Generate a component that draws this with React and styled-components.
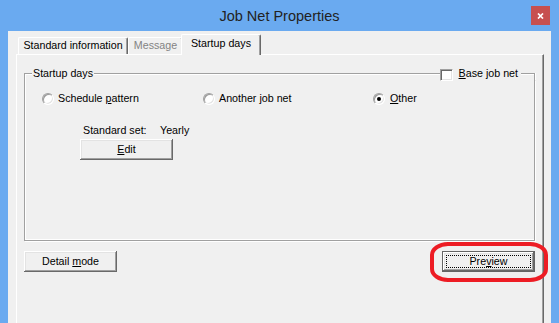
import React, { useState } from "react";
import styled, { createGlobalStyle, css } from "styled-components";

const GlobalStyle = createGlobalStyle`
    html, body {
        margin: 0;
        padding: 0;
        background: #6aaaf0;
    }
    body {
        font-family: "Liberation Sans", Arial, sans-serif;
        font-size: 10.7px;
        color: #000;
    }
`;

const bevel = css`
    box-shadow: inset -1px -1px 0 #696969, inset 1px 1px 0 #ffffff,
        inset -2px -2px 0 #a0a0a0, inset 2px 2px 0 #e3e3e3;
`;

const Window = styled.div`
    width: 559px;
    height: 323px;
    overflow: hidden;
    background: #6aaaf0;
    display: flex;
    flex-direction: column;
`;

const TitleBar = styled.div`
    height: 31px;
    flex-shrink: 0;
    display: grid;
    grid-template-columns: 1fr auto 1fr;
    align-items: center;
`;

const Title = styled.div`
    grid-column: 2;
    font-size: 14.5px;
    color: #222;
    padding-top: 1px;
`;

const CloseButton = styled.div`
    grid-column: 3;
    justify-self: end;
    align-self: start;
    margin: 6px 9px 0 0;
    width: 19px;
    height: 19px;
    background: #c75050;
    display: flex;
    align-items: center;
    justify-content: center;
`;

const Client = styled.div`
    flex: 1;
    margin: 0 8px;
    padding: 3px 7px 0 8px;
    background: #f0f0f0;
    display: flex;
    flex-direction: column;
`;

const TabStrip = styled.div`
    height: 20px;
    flex-shrink: 0;
    display: flex;
    align-items: flex-end;
    padding-left: 2px;
`;

const Tab = styled.div`
    box-sizing: border-box;
    width: ${(p) => p.width}px;
    height: ${(p) => (p.selected ? 21 : 17)}px;
    padding-top: ${(p) => (p.selected ? 2 : 1)}px;
    line-height: 13px;
    text-align: center;
    white-space: nowrap;
    background: #f0f0f0;
    border-top: 1px solid #fff;
    border-left: 1px solid #fff;
    border-right: 1px solid #696969;
    border-top-left-radius: 2px;
    border-top-right-radius: 2px;
    box-shadow: inset -1px 0 0 #a0a0a0;
    color: ${(p) => (p.disabled ? "#838383" : "#000")};
    ${(p) =>
        p.selected &&
        css`
            position: relative;
            margin: 0 -2px -1px -2px;
        `}
`;

const Panel = styled.div`
    flex: 1;
    border-top: 1px solid #fff;
    border-left: 1px solid #fff;
    border-right: 1px solid #696969;
    box-shadow: inset -1px 0 0 #a0a0a0;
    padding: 12px 8px 0 7px;
    display: flex;
    flex-direction: column;
`;

const GroupHeader = styled.div`
    height: 13px;
    display: flex;
    align-items: center;
`;

const Corner = styled.div`
    box-sizing: border-box;
    align-self: flex-end;
    height: 7px;
    width: ${(p) => p.width}px;
    margin-left: ${(p) => p.offset || 0}px;
    border-top: 1px solid #a0a0a0;
    ${(p) =>
        p.right
            ? css`
                  border-right: 1px solid #a0a0a0;
                  box-shadow: 1px 0 0 #fff, inset 0 1px 0 #fff;
              `
            : css`
                  border-left: 1px solid #a0a0a0;
                  box-shadow: inset 1px 1px 0 #fff;
              `}
`;

const HeaderLine = styled.div`
    flex: 1;
    align-self: flex-end;
    height: 7px;
    box-sizing: border-box;
    border-top: 1px solid #a0a0a0;
    box-shadow: inset 0 1px 0 #fff;
`;

const Caption = styled.span`
    padding: 0 1px;
    line-height: 13px;
    white-space: nowrap;
`;

const GroupBody = styled.div`
    box-sizing: border-box;
    height: 161px;
    border: 1px solid #a0a0a0;
    border-top: none;
    box-shadow: 1px 1px 0 #fff, inset 1px -1px 0 #fff;
    padding: 12px 0 0 17px;
`;

const RadioRow = styled.div`
    display: grid;
    grid-template-columns: 161px 170px auto;
    height: 13px;
    align-items: center;
`;

const Choice = styled.label`
    display: flex;
    align-items: center;
    gap: ${(p) => p.gap || 4}px;
    white-space: nowrap;
    line-height: 13px;
    cursor: default;
`;

const RadioCircle = styled.span`
    box-sizing: border-box;
    width: 12px;
    height: 12px;
    border-radius: 50%;
    background: #fff;
    border: 1px solid;
    border-color: #a0a0a0 #fff #fff #a0a0a0;
    box-shadow: inset 1px 1px 0 #9a9a9a, inset -1px -1px 0 #e3e3e3;
    display: flex;
    align-items: center;
    justify-content: center;

    &::after {
        content: "";
        width: 4px;
        height: 4px;
        border-radius: 50%;
        background: ${(p) => (p.checked ? "#000" : "transparent")};
    }
`;

const CheckBox = styled.span`
    box-sizing: border-box;
    width: 13px;
    height: 12px;
    margin-top: 2px;
    background: #fff;
    border: 1px solid;
    border-color: #a0a0a0 #fff #fff #a0a0a0;
    box-shadow: inset 1px 1px 0 #696969, inset -1px -1px 0 #e3e3e3;
`;

const SettingBlock = styled.div`
    margin-top: 19px;
    margin-left: 38px;
    display: flex;
    flex-direction: column;
    gap: 2px;
`;

const InfoRow = styled.div`
    display: grid;
    grid-template-columns: 77px auto;
    padding-left: 3px;
    line-height: 13px;
`;

const Button = styled.div`
    box-sizing: border-box;
    width: 93px;
    height: 21px;
    background: #f0f0f0;
    display: flex;
    align-items: center;
    justify-content: center;
    line-height: 13px;
    ${bevel}
    ${(p) =>
        p.isDefault &&
        css`
            position: relative;
            border: 1px solid #646464;
            &::before {
                content: "";
                position: absolute;
                inset: 3px;
                border: 1px dotted #000;
            }
        `}
`;

const ButtonRow = styled.div`
    margin-top: 10px;
    display: flex;
    justify-content: space-between;
`;

const Highlighted = styled.div`
    position: relative;
`;

const RedMark = styled.div`
    position: absolute;
    left: -12px;
    right: -13px;
    top: -9px;
    bottom: -10px;
    border: 4px solid #ed1c24;
    border-radius: 18px / 13px;
    pointer-events: none;
`;

function CloseGlyph() {
    return (
        <svg width="7" height="6" viewBox="0 0 7 6">
            <path d="M1 0.5 L6 5.5 M6 0.5 L1 5.5" stroke="#fff" strokeWidth="1.7" />
        </svg>
    );
}

export default function App() {
    const [choice, setChoice] = useState("other");
    const [baseNet, setBaseNet] = useState(false);

    return (
        <>
            <GlobalStyle />
            <Window>
                <TitleBar>
                    <Title>Job Net Properties</Title>
                    <CloseButton>
                        <CloseGlyph />
                    </CloseButton>
                </TitleBar>
                <Client>
                    <TabStrip>
                        <Tab width={110}>Standard information</Tab>
                        <Tab width={55} disabled>
                            Message
                        </Tab>
                        <Tab width={80} selected>
                            Startup days
                        </Tab>
                    </TabStrip>
                    <Panel>
                        <GroupHeader>
                            <Corner width={8} />
                            <Caption>Startup days</Caption>
                            <HeaderLine />
                            <Choice gap={6} onClick={() => setBaseNet((v) => !v)}>
                                <CheckBox />
                                <span>
                                    <u>B</u>ase job net
                                </span>
                            </Choice>
                            <Corner width={14} offset={3} right />
                        </GroupHeader>
                        <GroupBody>
                            <RadioRow>
                                <Choice onClick={() => setChoice("schedule")}>
                                    <RadioCircle checked={choice === "schedule"} />
                                    <span>
                                        Schedule <u>p</u>attern
                                    </span>
                                </Choice>
                                <Choice onClick={() => setChoice("another")}>
                                    <RadioCircle checked={choice === "another"} />
                                    <span>Another job net</span>
                                </Choice>
                                <Choice gap={5} onClick={() => setChoice("other")}>
                                    <RadioCircle checked={choice === "other"} />
                                    <span>
                                        <u>O</u>ther
                                    </span>
                                </Choice>
                            </RadioRow>
                            <SettingBlock>
                                <InfoRow>
                                    <span>Standard set:</span>
                                    <span>Yearly</span>
                                </InfoRow>
                                <Button>
                                    <span>
                                        <u>E</u>dit
                                    </span>
                                </Button>
                            </SettingBlock>
                        </GroupBody>
                        <ButtonRow>
                            <Button>
                                <span>
                                    Detail <u>m</u>ode
                                </span>
                            </Button>
                            <Highlighted>
                                <Button isDefault>
                                    <span>
                                        Pre<u>v</u>iew
                                    </span>
                                </Button>
                                <RedMark />
                            </Highlighted>
                        </ButtonRow>
                    </Panel>
                </Client>
            </Window>
        </>
    );
}
